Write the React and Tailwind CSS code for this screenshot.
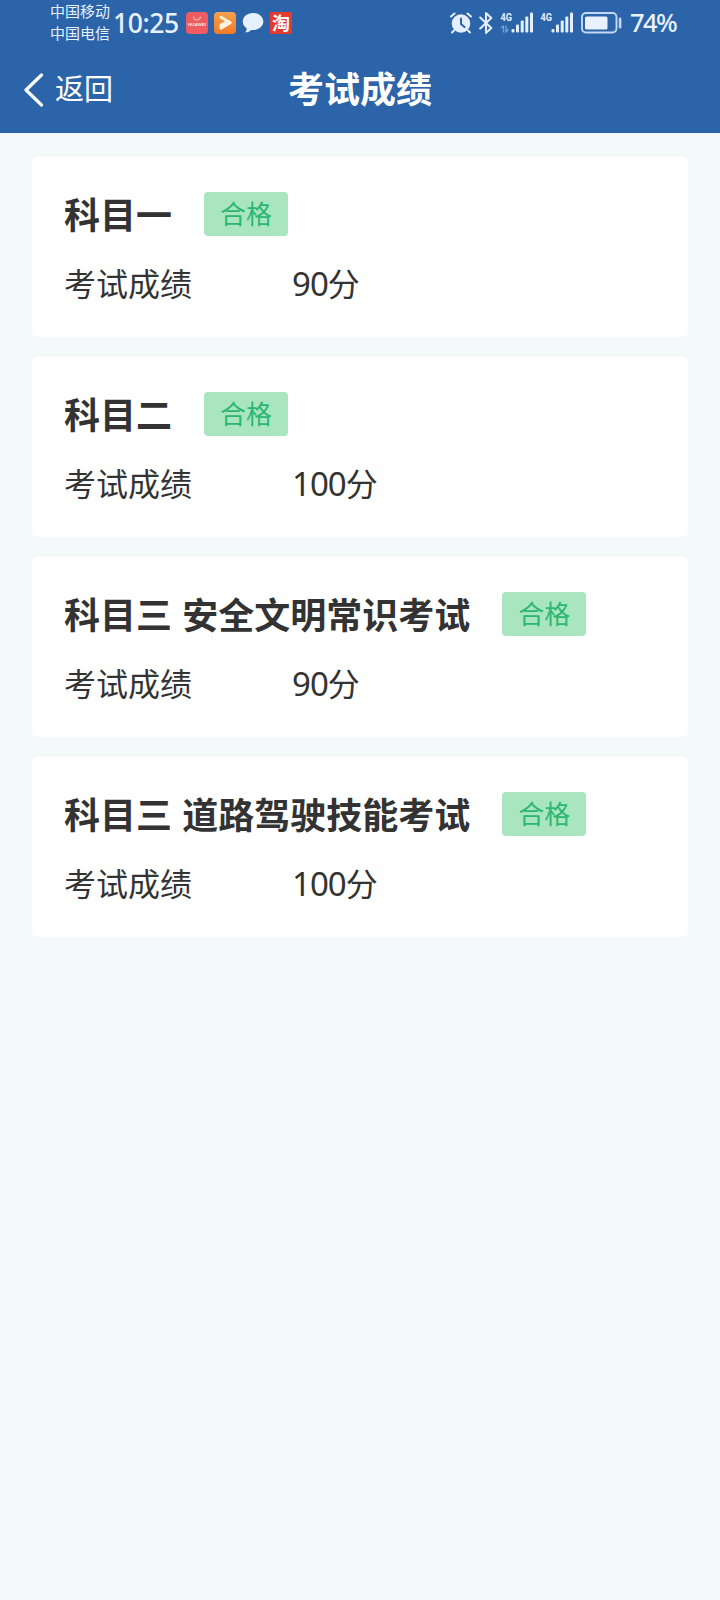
import clsx from 'clsx';

const RESULTS = [
  { id: 1, name: '科目一', score: 90, passed: true },
  { id: 2, name: '科目二', score: 100, passed: true },
  { id: 3, name: '科目三 安全文明常识考试', score: 90, passed: true },
  { id: 4, name: '科目三 道路驾驶技能考试', score: 100, passed: true },
];

function Signal({ data }) {
  return (
    <svg className="w-[34px] h-[24px] shrink-0 overflow-visible" viewBox="0 0 34 24" fill="#e4eefc">
      <text x="0.5" y="10" fontSize="11.5" fontWeight="700" fontFamily="Roboto, sans-serif" textLength="11.5" lengthAdjust="spacingAndGlyphs">4G</text>
      {data && (
        <g fill="none" stroke="#7ba2d6" strokeWidth="1.3">
          <path d="M1 17L3.5 15V21.5M6 14.5V21L8.5 18" />
        </g>
      )}
      <rect x="11.5" y="18" width="3" height="3.5" rx="1" />
      <rect x="16" y="13.5" width="3" height="8" rx="1" />
      <rect x="20.7" y="9.5" width="3" height="12" rx="1" />
      <rect x="25.3" y="5.5" width="3" height="16" rx="1" />
      <rect x="30" y="1.500" width="3" height="20" rx="1" />
    </svg>
  );
}

function StatusBar() {
  return (
    <div className="flex items-center h-[46px] pl-[50px] pr-[45px] text-[#e8f1fd]">
      <div className="w-[60px] pb-[3px] text-[15px] leading-[21.5px] whitespace-nowrap">
        <p>中国移动</p>
        <p>中国电信</p>
      </div>
      <span className="w-[76px] pl-[3px] text-[26.5px] leading-none font-medium font-['Noto_Sans',sans-serif] tracking-[-0.4px] whitespace-nowrap">10:25</span>

      {/* Notification icons */}
      <div className="flex items-center gap-1.5">
        <svg className="w-[22px] h-[22px]" viewBox="0 0 22 22">
          <rect width="22" height="22" rx="4" fill="#ee5c62" />
          <path d="M7.5 4.5a3.5 3.5 0 007 0" fill="none" stroke="#fbb9b8" strokeWidth="1.1" />
          <text x="2" y="14" fontSize="4.2" fontWeight="700" fill="#fff" fillOpacity="0.85" fontFamily="Liberation Sans, sans-serif" textLength="18" lengthAdjust="spacingAndGlyphs">HUAWEI</text>
        </svg>
        <svg className="w-[22px] h-[22px]" viewBox="0 0 22 22">
          <defs>
            <linearGradient id="video" x1="0" y1="0" x2="0" y2="1">
              <stop offset="0" stopColor="#f7a04e" />
              <stop offset="1" stopColor="#f17a26" />
            </linearGradient>
          </defs>
          <rect width="22" height="22" rx="4" fill="url(#video)" />
          <path d="M7 5.2L16.3 10.8L7 16.3V12.8L11.5 10.8" fill="none" stroke="#fff2df" strokeWidth="2.9" strokeLinejoin="round" strokeLinecap="round" />
        </svg>
        <svg className="w-[22px] h-[22px]" viewBox="0 0 22 22">
          <path d="M11 1C5 1 .8 4.8.8 9.6c0 3 1.5 5.4 4 6.9-.1 1.5-.6 2.8-1.4 4 2.4-.2 4.4-1.1 5.9-2.5l1.7.1c6 0 10.3-3.7 10.3-8.5S17 1 11 1z" fill="#e6effc" />
        </svg>
        <span className="w-[22px] h-[22px] bg-[#e23a2e] text-white text-[18px] leading-[20px] font-bold text-center">淘</span>
      </div>

      <div className="flex items-center ml-auto">
        {/* Alarm */}
        <svg className="w-[22px] h-[22px] mr-[7px]" viewBox="0 0 22 22" fill="none" stroke="#e4eefc" strokeLinecap="round">
          <circle cx="11" cy="11.5" r="9.3" fill="#e4eefc" stroke="none" />
          <path d="M1 4.5L4.5 1.5M21 4.5L17.5 1.5M4 18.5L2 20.5M18 18.5L20 20.5" strokeWidth="2" />
          <path d="M11 6.5V12L14.5 15" stroke="#2b64a9" strokeWidth="2" />
        </svg>
        {/* Bluetooth */}
        <svg className="w-[14px] h-[24px] mr-[7px]" viewBox="0 0 14 24" fill="none" stroke="#e4eefc" strokeWidth="2" strokeLinejoin="round" strokeLinecap="round">
          <path d="M1.2 6.5L12.3 17L7 22V2L12.3 7L1.2 17.5" />
        </svg>
        <Signal data />
        <div className="w-[6px]" />
        <Signal />
        {/* Battery */}
        <svg className="w-[42px] h-[22px] ml-[7px] mr-[7px]" viewBox="0 0 42 22">
          <rect x="1" y="1" width="34.5" height="19.5" rx="4" fill="none" stroke="#c3d8f2" strokeWidth="1.9" />
          <rect x="4" y="4.5" width="22.5" height="13" rx="1.5" fill="#e8f1fd" />
          <rect x="37.8" y="5.5" width="2.6" height="11" rx="1.3" fill="#c3d8f2" />
        </svg>
        <span className="w-[45px] text-[25.5px] leading-none font-medium font-['Noto_Sans',sans-serif] tracking-[-1.6px] whitespace-nowrap">74%</span>
      </div>
    </div>
  );
}

function ResultCard({ result }) {
  return (
    <div className="h-[180px] bg-white rounded-md px-8 pt-[35px]">
      <div className="flex items-center gap-8 h-[44px]">
        <h2 className="text-[36px] leading-[42px] pb-[2px] font-bold whitespace-nowrap [word-spacing:2px]">{result.name}</h2>
        <span
          className={clsx(
            'w-[84px] h-[44px] rounded-[4px] text-center text-[26px] leading-[42px]',
            result.passed ? 'bg-[#a9e6c0] text-[#2bb673]' : 'bg-red-200 text-red-500'
          )}
        >
          {result.passed ? '合格' : '不合格'}
        </span>
      </div>
      <div className="flex mt-[22px] text-[32px] leading-[48px]">
        <span className="w-[228px]">考试成绩</span>
        <span>
          <span className="font-['Noto_Sans',sans-serif] text-[33px] leading-none tracking-[-1px]">{result.score}</span>分
        </span>
      </div>
    </div>
  );
}

export default function App() {
  return (
    <div className="min-h-screen bg-[#f4f9fa] text-[#333] font-['Noto_Sans_CJK_SC',sans-serif]">
      <header className="h-[133px] bg-[#2b64a9] text-white">
        <StatusBar />
        <div className="grid grid-cols-[1fr_auto_1fr] items-center h-[87px] px-6">
          <button className="flex items-center text-[29px] leading-none">
            <svg className="w-[20px] h-[34px] mr-[11px]" viewBox="0 0 20 34" fill="none" stroke="currentColor" strokeWidth="3.2" strokeLinecap="round" strokeLinejoin="round">
              <path d="M17.5 2L2 17L17.5 32" />
            </svg>
            <span className="pb-[4px]">返回</span>
          </button>
          <h1 className="text-[36px] leading-none pb-[5px] font-bold">考试成绩</h1>
        </div>
      </header>

      <main className="flex flex-col gap-5 px-8 pt-6">
        {RESULTS.map((r) => (
          <ResultCard key={r.id} result={r} />
        ))}
      </main>
    </div>
  );
}
